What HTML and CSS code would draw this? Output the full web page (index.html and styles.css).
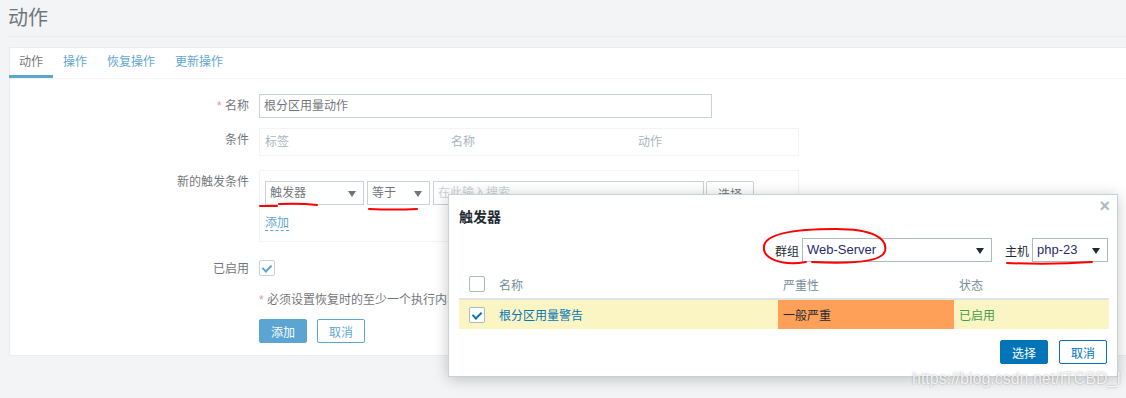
FILE: index.html
```html
<!DOCTYPE html>
<html lang="zh">
<head>
    <meta charset="UTF-8">
    <title>动作</title>
    <link rel="stylesheet" href="styles.css">
</head>
<body>
<header class="page-header">
    <h1>动作</h1>
</header>

<!-- Main form -->
<div class="panel">
    <ul class="tabs">
        <li class="tab active">动作</li>
        <li class="tab">操作</li>
        <li class="tab">恢复操作</li>
        <li class="tab">更新操作</li>
    </ul>

    <div class="form">
        <div class="form-row">
            <label class="form-label"><span class="req">*</span> 名称</label>
            <div class="text-input name-input">根分区用量动作</div>
        </div>

        <div class="form-row row-cond">
            <label class="form-label">条件</label>
            <div class="cond-box">
                <span>标签</span>
                <span>名称</span>
                <span>动作</span>
            </div>
        </div>

        <div class="form-row row-new">
            <label class="form-label">新的触发条件</label>
            <div class="new-box">
                <div class="new-line">
                    <div class="select sel-type">触发器<i class="arrow"></i></div>
                    <div class="select sel-op">等于<i class="arrow"></i></div>
                    <div class="text-input search-input">在此输入搜索</div>
                    <button class="btn-alt">选择</button>
                </div>
                <a class="link">添加</a>
            </div>
        </div>

        <div class="form-row row-enabled">
            <label class="form-label">已启用</label>
            <span class="checkbox checked"></span>
        </div>

        <div class="form-row row-note">
            <label class="form-label"></label>
            <p class="note"><span class="req">*</span> 必须设置恢复时的至少一个执行内容或执行内容或更新时的执行内容。</p>
        </div>

        <div class="form-row row-buttons">
            <label class="form-label"></label>
            <button class="btn">添加</button>
            <button class="btn-outline">取消</button>
        </div>
    </div>
</div>

<!-- page dimmed behind the dialog -->
<div class="overlay-bg"></div>

<!-- Trigger picker dialog -->
<div class="dialog">
    <div class="dialog-head">
        <h2>触发器</h2>
        <span class="close">&times;</span>
    </div>
    <div class="dialog-filter">
        <span class="filter-label">群组</span>
        <div class="select sel-group">Web-Server<i class="arrow"></i></div>
        <span class="filter-label">主机</span>
        <div class="select sel-host">php-23<i class="arrow"></i></div>
    </div>
    <table class="list-table">
        <thead>
        <tr>
            <th class="col-check"><span class="checkbox"></span></th>
            <th class="col-name">名称</th>
            <th class="col-sev">严重性</th>
            <th class="col-status">状态</th>
        </tr>
        </thead>
        <tbody>
        <tr class="row-selected">
            <td class="col-check"><span class="checkbox checked"></span></td>
            <td class="col-name"><a class="link">根分区用量警告</a></td>
            <td class="col-sev sev-average">一般严重</td>
            <td class="col-status status-on">已启用</td>
        </tr>
        </tbody>
    </table>
    <div class="dialog-foot">
        <button class="btn">选择</button>
        <button class="btn-outline">取消</button>
    </div>
</div>

<!-- hand-drawn red marks on the screenshot -->
<svg class="marks" width="1126" height="398" viewBox="0 0 1126 398">
    <g fill="none" stroke="#f00" stroke-width="2" stroke-linecap="round">
        <path d="M260 206 L277 206 M279 204 Q300 203 317 205"/>
        <path d="M369 209 Q395 210 417 209"/>
        <path d="M806 262 C782 266 762 259 764 246 C766 233 796 229 836 229 C872 229 888 238 885 251 C882 262 850 264 812 262"/>
        <path d="M1007 263 Q1050 265 1092 262"/>
    </g>
</svg>

<div class="watermark">https://blog.csdn.net/ITCBD_I</div>
</body>
</html>
```

FILE: styles.css
```css
* { box-sizing: border-box; }
body {
  margin: 0;
  width: 1126px;
  height: 398px;
  overflow: hidden;
  position: relative;
  background: #ebeef0;
  color: #1f2c33;
  font-family: "Liberation Sans", "Noto Sans CJK SC", sans-serif;
  font-size: 12px;
}
.page-header {
  margin-left: 8px;
  height: 37px;
  border-bottom: 1px solid #dfe4e7;
}
.page-header h1 {
  margin: 0;
  font-size: 20px;
  font-weight: normal;
  line-height: 36px;
}
/* white box with tabs and the form */
.panel {
  margin: 10px 0 0 9px;
  width: 1130px;
  background: #fff;
  border: 1px solid #dfe4e7;
}
.tabs {
  list-style: none;
  margin: 0;
  padding: 0;
  display: flex;
  height: 31px;
  border-bottom: 1px solid #ebeef0;
}
.tab {
  padding: 0 10px;
  line-height: 29px;
  color: #0275b8;
  border-bottom: 3px solid transparent;
}
.tab:first-child { margin-left: -1px; }
.tab.active {
  color: #1f2c33;
  border-bottom-color: #0275b8;
}
.form { padding: 15px 0 12px; }
.form-row { display: flex; align-items: flex-start; }
.form-label {
  width: 249px;
  flex: none;
  padding-right: 10px;
  text-align: right;
  line-height: 24px;
}
.req { color: #e45959; }
.text-input {
  height: 24px;
  line-height: 22px;
  padding: 0 4px;
  border: 1px solid #acbbc2;
  background: #fff;
}
.name-input { width: 453px; }
.row-cond { margin-top: 10px; }
.cond-box {
  width: 540px;
  height: 28px;
  border: 1px solid #ebeef0;
  padding-left: 5px;
  display: grid;
  grid-template-columns: 186px 187px 1fr;
  line-height: 26px;
  color: #768d99;
}
.row-new { margin-top: 14px; }
.new-box {
  width: 540px;
  border: 1px solid #ebeef0;
  padding: 10px 5px 10px;
}
.new-line { display: flex; gap: 3px; }
.select {
  position: relative;
  height: 24px;
  line-height: 22px;
  padding: 0 20px 0 4px;
  border: 1px solid #acbbc2;
  background: #fff;
  white-space: nowrap;
}
.arrow {
  position: absolute;
  right: 7px;
  top: 9px;
  border-left: 4px solid transparent;
  border-right: 4px solid transparent;
  border-top: 6px solid #1f2c33;
}
.sel-type { width: 99px; }
.sel-op { width: 63px; }
.search-input { width: 271px; color: #acbbc2; }
.btn-alt {
  margin-left: -1px;
  width: 48px;
  height: 24px;
  border: 1px solid #acbbc2;
  border-radius: 2px;
  background: #fff;
  color: #1f2c33;
  font: inherit;
  padding: 0;
}
.link {
  color: #0275b8;
  border-bottom: 1px dashed #0275b8;
}
.new-box .link {
  display: inline-block;
  margin-top: 11px;
  line-height: 14px;
}
.row-enabled { margin-top: 18px; }
.checkbox {
  display: inline-block;
  position: relative;
  width: 16px;
  height: 16px;
  border: 1px solid #acbbc2;
  border-radius: 2px;
  background: #fff;
  vertical-align: middle;
}
.checkbox.checked::after {
  content: "";
  position: absolute;
  left: 4px;
  top: 2px;
  width: 4px;
  height: 7px;
  border-right: 2px solid #0275b8;
  border-bottom: 2px solid #0275b8;
  transform: rotate(45deg);
}
.row-enabled .form-label { line-height: 18px; }
.row-note { margin-top: 14px; }
.note { margin: 0; line-height: 16px; white-space: nowrap; }
.row-buttons { margin-top: 11px; }
.btn, .btn-outline {
  width: 48px;
  height: 24px;
  padding: 0;
  border-radius: 2px;
  font: inherit;
}
.btn {
  background: #0275b8;
  border: 1px solid #0275b8;
  color: #fff;
}
.btn-outline {
  background: #fff;
  border: 1px solid #0275b8;
  color: #0275b8;
  margin-left: 10px;
}
.overlay-bg {
  position: absolute;
  inset: 0;
  background: rgba(255, 255, 255, 0.35);
}
/* trigger dialog */
.dialog {
  position: absolute;
  left: 448px;
  top: 194px;
  width: 670px;
  height: 183px;
  background: #fff;
  border: 1px solid #c8d1d5;
  box-shadow: 0 2px 14px rgba(0, 0, 0, 0.22);
  padding: 0 10px;
}
.dialog-head {
  height: 43px;
  display: flex;
  align-items: center;
  justify-content: space-between;
}
.dialog-head h2 {
  margin: 0;
  font-size: 14px;
  font-weight: bold;
  line-height: 18px;
}
.close {
  align-self: flex-start;
  margin-top: 2px;
  margin-right: -3px;
  color: #acbbc2;
  font-size: 18px;
  font-weight: bold;
  line-height: 18px;
}
.dialog-filter {
  display: flex;
  justify-content: flex-end;
  align-items: center;
  height: 24px;
}
.filter-label { margin-right: 3px; }
.sel-group { width: 190px; font-size: 13px; color: #2b2b6b; margin-right: 13px; }
.sel-host { width: 76px; font-size: 13px; color: #2b2b6b; margin-right: -1px; }
.list-table {
  margin-top: 8px;
  width: 650px;
  border-collapse: collapse;
}
.list-table th {
  height: 29px;
  text-align: left;
  font-weight: normal;
  color: #768d99;
  border-bottom: 2px solid #dfe4e7;
  padding: 0 5px;
}
.list-table td {
  height: 30px;
  padding: 0 5px;
}
.list-table .col-check { width: 35px; padding-left: 10px; }
.col-name { width: 284px; }
.col-sev { width: 176px; }
.row-selected { background: #fbf5c4; }
.row-selected .link { border-bottom: none; }
.sev-average { background: #ffa059; }
.status-on { color: #429e47; }
.dialog-foot {
  display: flex;
  justify-content: flex-end;
  margin-top: 11px;
}
.dialog-foot .btn-outline { margin-left: 11px; }
.marks {
  position: absolute;
  left: 0;
  top: 0;
}
.watermark {
  position: absolute;
  left: 912px;
  top: 370px;
  font-family: "Liberation Sans", sans-serif;
  font-size: 16px;
  color: rgba(255, 255, 255, 0.85);
  text-shadow: 0 0 2px rgba(0, 0, 0, 0.35);
  white-space: nowrap;
}
```
